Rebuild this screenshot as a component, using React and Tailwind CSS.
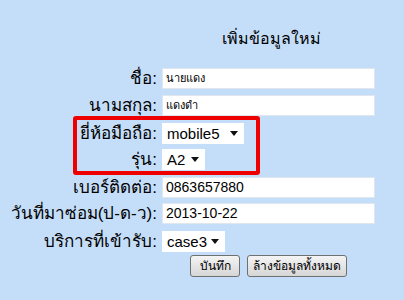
import React from "react"

function Caret() {
  return (
    <svg width="8" height="5" viewBox="0 0 8 5" className="shrink-0">
      <path d="M0 0 L8 0 L4 5 Z" fill="#111" />
    </svg>
  )
}

function Select({ value, width }) {
  return (
    <div
      className={`${width} h-[21px] bg-white flex items-center justify-between pl-[5px] pr-[6px] text-[15px] text-black`}
    >
      <span className="leading-none">{value}</span>
      <Caret />
    </div>
  )
}

function Field({ value, small }) {
  return (
    <div
      className={`w-[213px] h-[21px] bg-white border border-[#dfe6ee] flex items-center pl-[3px] text-black ${
        small ? "text-[11px]" : "text-[14px]"
      }`}
    >
      {value}
    </div>
  )
}

function Row({ label, children, top }) {
  return (
    <div className={`flex items-center ${top}`}>
      <div className="w-[157px] text-right text-[17px] leading-none text-black whitespace-nowrap">
        {label}
      </div>
      <div className="ml-[5px]">{children}</div>
    </div>
  )
}

export default function App() {
  return (
    <div
      className="relative w-[404px] h-[300px] bg-[#c4ddf8] overflow-hidden"
      style={{ fontFamily: '"Liberation Sans", "Noto Sans", Arial, sans-serif' }}
    >
      {/* title */}
      <div className="pt-[29px] pl-[222px] text-[16px] leading-[20px] text-black">
        เพิ่มข้อมูลใหม่
      </div>

      {/* form */}
      <div className="flex flex-col">
        <Row label="ชื่อ:" top="mt-[19px]">
          <Field value="นายแดง" small />
        </Row>
        <Row label="นามสกุล:" top="mt-[6px]">
          <Field value="แดงดำ" small />
        </Row>
        <Row label="ยี่ห้อมือถือ:" top="mt-[7px]">
          <Select value="mobile5" width="w-[82px]" />
        </Row>
        <Row label="รุ่น:" top="mt-[5px]">
          <Select value="A2" width="w-[43px]" />
        </Row>
        <Row label="เบอร์ติดต่อ:" top="mt-[7px]">
          <Field value="0863657880" />
        </Row>
        <Row label="วันที่มาซ่อม(ป-ด-ว):" top="mt-[5px]">
          <Field value="2013-10-22" />
        </Row>
        <Row label="บริการที่เข้ารับ:" top="mt-[7px]">
          <Select value="case3" width="w-[63px]" />
        </Row>

        <div className="flex gap-[7px] mt-[3px] ml-[190px]">
          <button className="w-[50px] h-[22px] rounded-[3px] border border-[#707070] bg-gradient-to-b from-[#f4f4f4] to-[#d6d6d6] text-[12px] text-black leading-none">
            บันทึก
          </button>
          <button className="w-[100px] h-[22px] rounded-[3px] border border-[#707070] bg-gradient-to-b from-[#f4f4f4] to-[#d6d6d6] text-[12px] text-black leading-none">
            ล้างข้อมูลทั้งหมด
          </button>
        </div>
      </div>

      {/* highlight annotation */}
      <div className="absolute left-[73px] top-[116px] w-[187px] h-[59px] border-4 border-[#ee0000] rounded-[3px]" />
    </div>
  )
}
